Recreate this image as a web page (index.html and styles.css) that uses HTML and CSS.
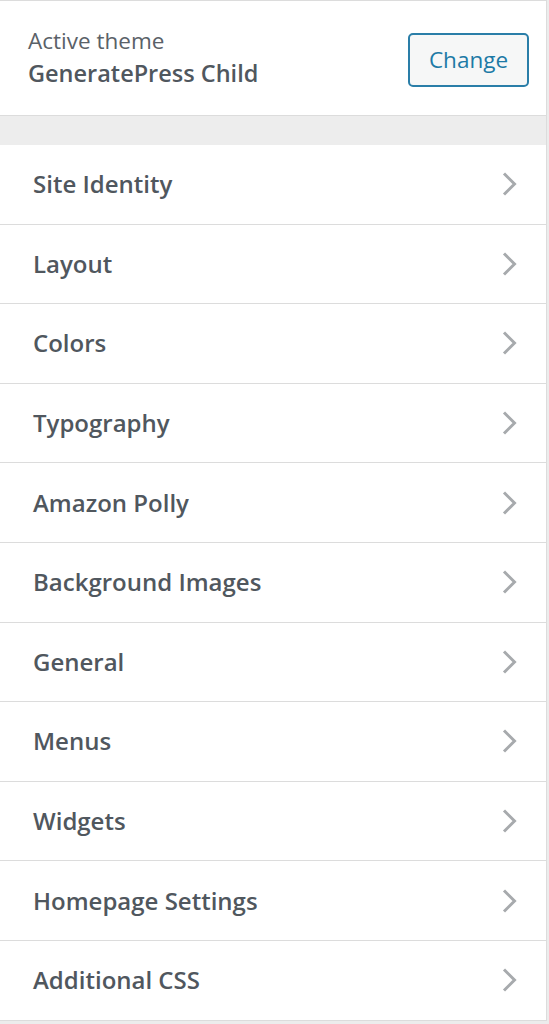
FILE: index.html
```html
<!DOCTYPE html>
<html>
<head>
<meta charset="utf-8">
<link rel="stylesheet" href="styles.css">
</head>
<body>
<div class="panel">
  <div class="theme">
    <div class="theme-info">
      <div class="theme-label">Active theme</div>
      <div class="theme-name">GeneratePress Child</div>
    </div>
    <button class="change-btn">Change</button>
  </div>
  <div class="spacer"></div>
  <ul class="sections">
    <li class="section"><span>Site Identity</span><svg class="chev" viewBox="0 0 20 26"><path d="M4 2.5 L14.5 13 L4 23.5"/></svg></li>
    <li class="section"><span>Layout</span><svg class="chev" viewBox="0 0 20 26"><path d="M4 2.5 L14.5 13 L4 23.5"/></svg></li>
    <li class="section"><span>Colors</span><svg class="chev" viewBox="0 0 20 26"><path d="M4 2.5 L14.5 13 L4 23.5"/></svg></li>
    <li class="section"><span>Typography</span><svg class="chev" viewBox="0 0 20 26"><path d="M4 2.5 L14.5 13 L4 23.5"/></svg></li>
    <li class="section"><span>Amazon Polly</span><svg class="chev" viewBox="0 0 20 26"><path d="M4 2.5 L14.5 13 L4 23.5"/></svg></li>
    <li class="section"><span>Background Images</span><svg class="chev" viewBox="0 0 20 26"><path d="M4 2.5 L14.5 13 L4 23.5"/></svg></li>
    <li class="section"><span>General</span><svg class="chev" viewBox="0 0 20 26"><path d="M4 2.5 L14.5 13 L4 23.5"/></svg></li>
    <li class="section"><span>Menus</span><svg class="chev" viewBox="0 0 20 26"><path d="M4 2.5 L14.5 13 L4 23.5"/></svg></li>
    <li class="section"><span>Widgets</span><svg class="chev" viewBox="0 0 20 26"><path d="M4 2.5 L14.5 13 L4 23.5"/></svg></li>
    <li class="section"><span>Homepage Settings</span><svg class="chev" viewBox="0 0 20 26"><path d="M4 2.5 L14.5 13 L4 23.5"/></svg></li>
    <li class="section"><span>Additional CSS</span><svg class="chev" viewBox="0 0 20 26"><path d="M4 2.5 L14.5 13 L4 23.5"/></svg></li>
  </ul>
</div>
</body>
</html>
```
FILE: styles.css
```css
html, body {
  margin: 0;
  padding: 0;
  background: #ececec;
  font-family: "Open Sans", "Segoe UI", sans-serif;
}
.panel {
  width: 546px;
  background: #ededed;
  border-right: 1px solid #dcdcdc;
  border-top: 1px solid #dcdcdc;
}
.theme {
  background: #fff;
  height: 115px;
  display: flex;
  align-items: flex-start;
  justify-content: space-between;
  padding: 0 17px 0 28px;
  border-bottom: 1px solid #dcdcdc;
  box-sizing: border-box;
}
.theme-info {
  padding-top: 25px;
}
.theme-label {
  font-size: 22.5px;
  color: #5a6168;
  line-height: 30px;
}
.theme-name {
  font-size: 23.5px;
  font-weight: 600;
  color: #50575e;
  line-height: 32px;
  margin-top: 1px;
}
.change-btn {
  width: 121px;
  height: 54px;
  margin-top: 32px;
  border: 2px solid #2a7ea8;
  border-radius: 5px;
  background: #f6f7f7;
  color: #1d7aa6;
  font-family: "Open Sans", "Segoe UI", sans-serif;
  font-size: 22.5px;
  padding: 0 0 2px 0;
}
.spacer {
  height: 29px;
  background: #ededed;
}
.sections {
  list-style: none;
  margin: 0;
  padding: 0;
}
.section {
  height: 78.6px;
  background: #fff;
  border-bottom: 1px solid #dcdcdc;
  display: flex;
  align-items: center;
  justify-content: space-between;
  padding: 0 26px 0 33px;
  font-size: 24px;
  font-weight: 600;
  color: #50575e;
  box-sizing: content-box;
}
.section span {
  margin-top: -1px;
}
.chev {
  width: 20px;
  height: 26px;
  fill: none;
  stroke: #a7aaad;
  stroke-width: 3;
}
```
